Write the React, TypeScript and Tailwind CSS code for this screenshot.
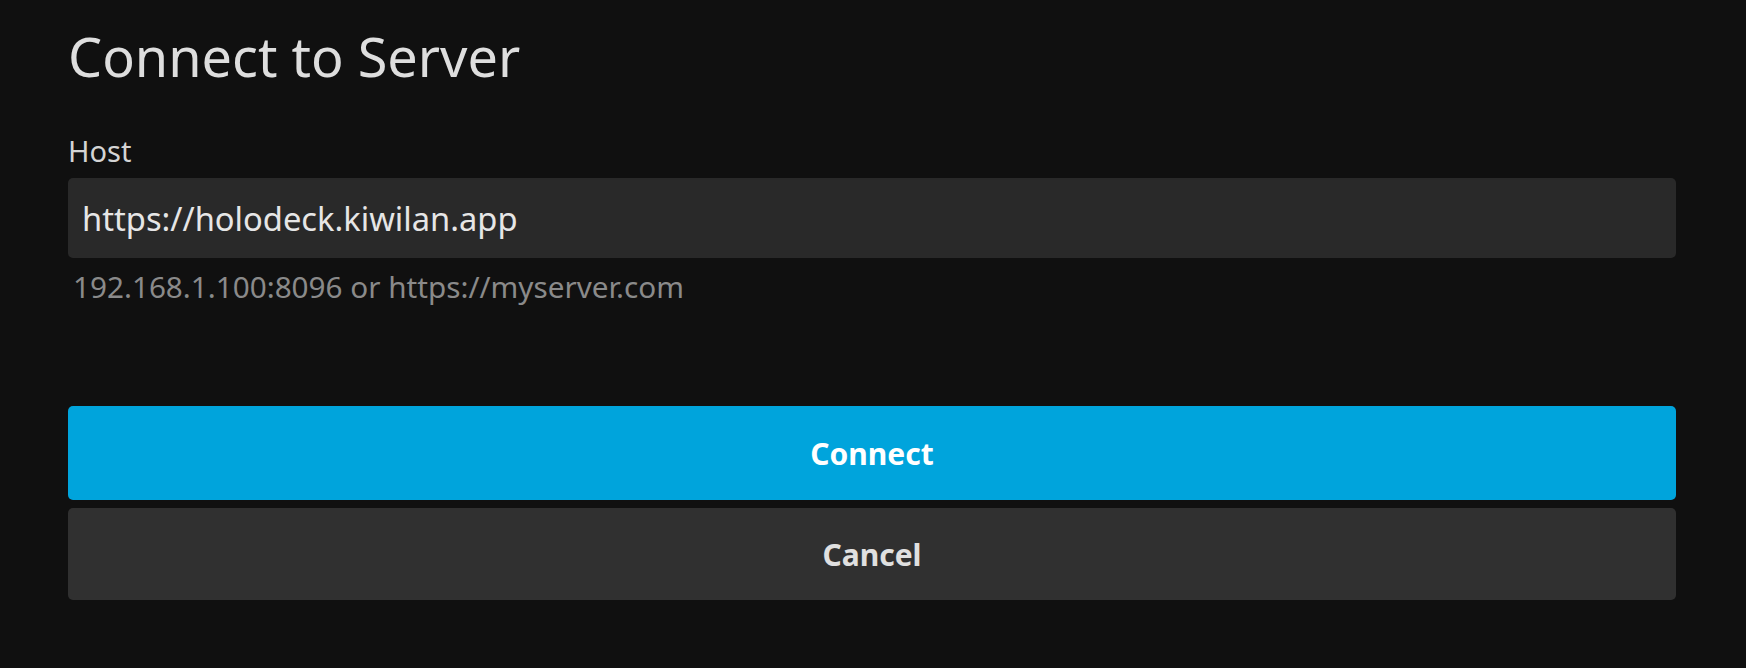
export default function App() {
  return (
    <div className="h-[668px] w-full bg-[#101010] pl-[68px] pr-[70px] pt-[24px] font-['Noto_Sans',sans-serif] text-[#e0e0e0]">
      <h1 className="text-[54px] leading-[64px] font-normal text-[#dedede]">Connect to Server</h1>

      <div className="mt-[46px] flex flex-col">
        <label htmlFor="host" className="text-[29px] leading-[34px] text-[#d4d4d4]">
          Host
        </label>
        <input
          id="host"
          type="text"
          defaultValue="https://holodeck.kiwilan.app"
          className="mt-[10px] h-[80px] w-full rounded-[5px] bg-[#292929] px-[14px] text-[32.7px] text-[#e6e6e6] outline-none"
        />
        <div className="ml-[5px] mt-[11px] text-[29.7px] leading-[36px] text-[#8a8a8a]">
          192.168.1.100:8096 or https://myserver.com
        </div>
      </div>

      <div className="mt-[101px] flex flex-col gap-[8px]">
        <button className="h-[94px] w-full rounded-[5px] bg-[#00a4dc] text-[30px] font-bold text-white">
          Connect
        </button>
        <button className="h-[92px] w-full rounded-[5px] bg-[#303030] text-[30px] font-bold text-[#e0e0e0]">
          Cancel
        </button>
      </div>
    </div>
  );
}
